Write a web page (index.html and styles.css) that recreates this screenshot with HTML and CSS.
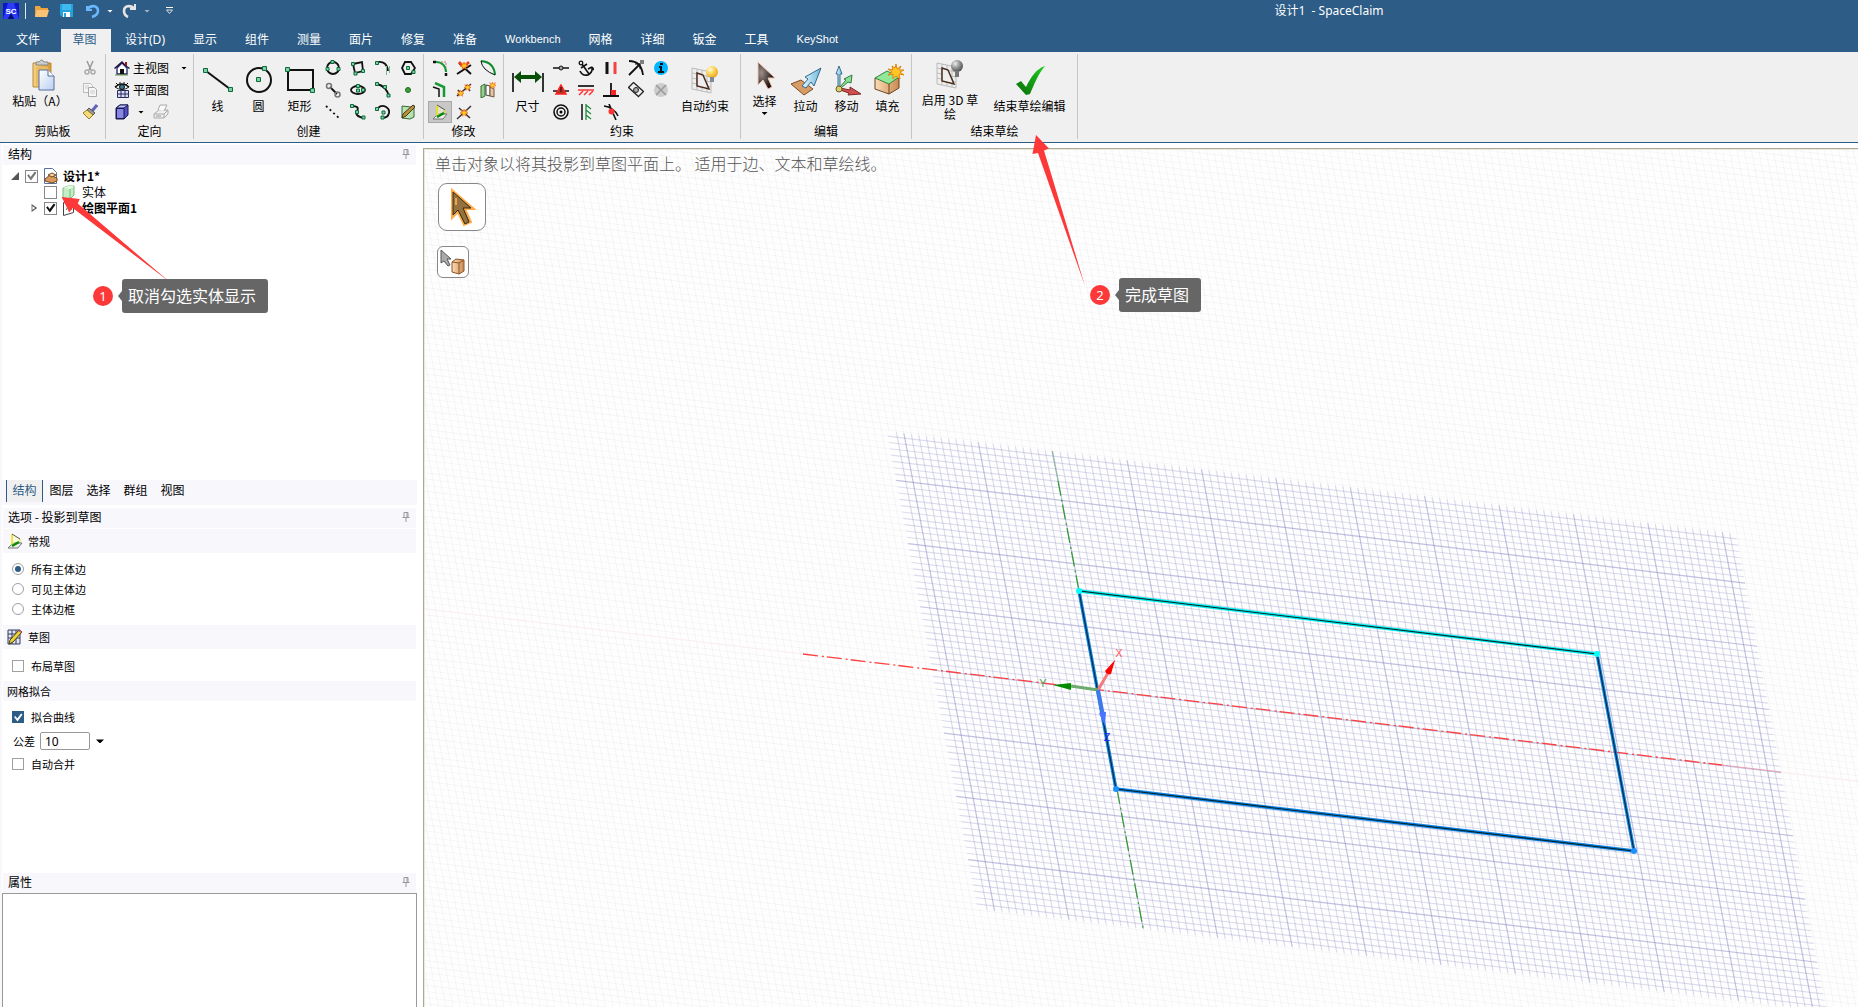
FILE: index.html
```html
<!DOCTYPE html>
<html lang="zh-CN">
<head>
<meta charset="utf-8">
<title>设计1 - SpaceClaim</title>
<link rel="stylesheet" href="styles.css">
</head>
<body>
<svg class="defs" aria-hidden="true">
  <defs>
    <linearGradient id="gold" x1="0" x2="1"><stop offset="0" stop-color="#f6d283"/><stop offset="1" stop-color="#d79a35"/></linearGradient>
    <linearGradient id="paper" x1="0" y1="0" x2="1" y2="1"><stop offset="0" stop-color="#fff"/><stop offset="1" stop-color="#b9cff0"/></linearGradient>
    <linearGradient id="cyan" x1="0" x2="1"><stop offset="0" stop-color="#e2f6fd"/><stop offset="1" stop-color="#6db9dd"/></linearGradient>
    <linearGradient id="wood" x1="0" x2="1"><stop offset="0" stop-color="#fbdcb8"/><stop offset="1" stop-color="#c98a50"/></linearGradient>
    <linearGradient id="check" x1="0" y1="1" x2="1" y2="0"><stop offset="0" stop-color="#0a6a0a"/><stop offset="1" stop-color="#1fd01f"/></linearGradient>
    <radialGradient id="bulb" cx=".35" cy=".3" r=".8"><stop offset="0" stop-color="#fffbe0"/><stop offset=".5" stop-color="#fbd04a"/><stop offset="1" stop-color="#e29a1c"/></radialGradient>
    <radialGradient id="bulb-off" cx=".35" cy=".3" r=".8"><stop offset="0" stop-color="#eee"/><stop offset=".5" stop-color="#8d8d8d"/><stop offset="1" stop-color="#444"/></radialGradient>
    <radialGradient id="dark" cx=".2" cy=".4" r=".7"><stop offset="0" stop-color="#9a8f8c"/><stop offset="1" stop-color="#1c0f0a"/></radialGradient>
    <symbol id="pin" viewBox="0 0 8 10"><path d="M2 .5h4v5H2zM.5 5.5h7M4 6v4M5 1v4" fill="none" stroke="#999"/></symbol>
    <symbol id="project" viewBox="0 0 16 16"><path d="M1 15l5-5h9l-4 5z" fill="#eee" stroke="#777"/><path d="M5 1v11l8-6z" fill="#fdfdc8" fill-opacity=".5"/><path d="M5 1v11" stroke="#ece200" stroke-width="1.500"/><path d="M13 6v3" stroke="#ece200"/><path d="M5 1l8 5" stroke="#555"/><path d="M5 13l7-4" stroke="#078a07" stroke-width="2.400"/></symbol>
    <symbol id="burst" viewBox="0 0 10 10"><path d="M5 0l1 3 3-2-1 3 2 1-3 1 1 3-3-2-2 2V6L0 5l3-1-2-3 3 2z" fill="#ffd21c" stroke="#f05a1c" stroke-width=".8"/></symbol>
  </defs>
</svg>

<div class="app">
  <header class="titlebar">
    <div class="quick">
      <svg class="logo" viewBox="0 0 16 16"><rect width="16" height="16" fill="#0c18c8"/><path d="M5 0h6l5 16h-5L8 10l-3 6H0z" fill="#2b3cf8"/><path d="M5 16l3-6 3 6z" fill="#000c70"/><text x="8" y="11" text-anchor="middle">SC</text></svg>
      <span class="rule"></span>
      <button class="q" aria-label="打开"><svg width="16" height="16"><path d="M1 14V3h5l1 2h7v3" fill="#eda43f"/><path d="M1 14l2-7h12l-2 7z" fill="#fbc277"/></svg></button>
      <button class="q" aria-label="保存"><svg width="16" height="16"><path d="M1 1h13v13H3l-2-2z" fill="#22a3dc"/><path d="M3 1h9v6H3z" fill="#3fb9ee"/><path d="M4 9h7v5H4z" fill="#fff"/><path d="M5 10h2v4H5z" fill="#22a3dc"/></svg></button>
      <button class="q" aria-label="撤消"><svg width="16" height="16"><path d="M3 3v4h5" fill="none" stroke="#6cb8ff" stroke-width="2"/><path d="M3 6c5-5 11-3 11 2 0 3-3 5-6 6" fill="none" stroke="#6cb8ff" stroke-width="2.600"/></svg></button>
      <i class="caret light"></i>
      <button class="q redo" aria-label="恢复"><svg width="16" height="16"><path d="M13 1v5H8" fill="none" stroke="#e4e4e4" stroke-width="2"/><path d="M13 6C8 1 2 3 2 8c0 3 2 5 4 6" fill="none" stroke="#e4e4e4" stroke-width="2.600"/></svg></button>
      <i class="caret dim"></i>
      <svg class="more" width="7" height="8"><path d="M0 .5h7" stroke="#fff"/><path d="M.5 3h6L3.500 6.500z" fill="none" stroke="#ddd"/></svg>
    </div>
    <h1 class="title">设计1&nbsp; - SpaceClaim</h1>
  </header>

  <nav class="tabs">
    <button class="tab file">文件</button><button class="tab active">草图</button><button class="tab">设计<span class="key">(D)</span></button><button class="tab">显示</button><button class="tab">组件</button><button class="tab">测量</button><button class="tab">面片</button><button class="tab">修复</button><button class="tab">准备</button><button class="tab latin">Workbench</button><button class="tab">网格</button><button class="tab">详细</button><button class="tab">钣金</button><button class="tab">工具</button><button class="tab latin">KeyShot</button>
  </nav>

  <div class="ribbon">
    <section class="group">
      <div class="tools">
        <button class="big high w74"><svg width="32" height="32"><path d="M9 4h18v24H9z" fill="url(#gold)" stroke="#b98a3c"/><path d="M12 6V3h3q3-4 5 0h4v3z" fill="#ccc" stroke="#888"/><path d="M12 8h12v18H12z" fill="#e9bc63"/><path d="M15 11h9l6 6v14H15z" fill="url(#paper)" stroke="#546fa0"/><path d="M24 11v6h6" fill="#fff" stroke="#546fa0"/></svg><span>粘贴（A）</span></button>
        <div class="grid c1">
          <button aria-label="剪切"><svg width="16" height="16"><path d="M5 1l4 9M11 1L7 10" stroke="#999" stroke-width="1.500"/><circle cx="5" cy="12" r="2" fill="none" stroke="#aaa" stroke-width="1.500"/><circle cx="11" cy="12" r="2" fill="none" stroke="#aaa" stroke-width="1.500"/></svg></button>
          <button aria-label="复制"><svg width="16" height="16"><path d="M1.500 1.500h7l2 2v7h-9z" fill="#f6f6f6" stroke="#bbb"/><path d="M6.500 5.500h6l2 2v7h-8z" fill="#f6f6f6" stroke="#aaa"/><path d="M3 4h4M3 6h3M8 9h5M8 11h5" stroke="#ccc"/></svg></button>
          <button aria-label="格式刷"><svg width="16" height="16"><path d="M15 1l-5 6" stroke="#6464b8" stroke-width="3"/><path d="M7 4l6 5-2 2-6-5z" fill="#999" stroke="#555"/><path d="M5 6l6 5-4 4-6-6z" fill="#f4dc78" stroke="#9a7a22"/></svg></button>
        </div>
      </div>
      <h2>剪贴板</h2>
    </section>
    <section class="group">
      <div class="tools orient">
        <div class="line"><button><svg width="16" height="16"><path d="M3 8v6h10V8L8 3z" fill="#fff" stroke="#22226a" stroke-width="1.300"/><path d="M0 8l8-7 3 3V2h2v4l3 2-1 1-7-6-7 6z" fill="#1d1640"/><path d="M11 2h2v4l-2-1z" fill="#a11"/><path d="M6 9h4v5H6z" fill="#111"/><path d="M1 15h13" stroke="#6a9a3a"/></svg>主视图</button><i class="caret push"></i></div>
        <div class="line"><button><svg width="16" height="16"><path d="M1 5q7-6 14 0" fill="none" stroke="#111" stroke-width="1.500"/><path d="M1 5q7 5 14 0" fill="#fff" stroke="#111"/><circle cx="8" cy="5" r="2.500" fill="#397b8f" stroke="#111"/><path d="M2 1l2 2M6 0v2M10 0v2M14 1l-2 2" stroke="#111"/><path d="M3.500 8.500h11v7h-11zM3.500 12h11M7 8v8M11 8v8" fill="#d8dcf4" stroke="#2b2b5c"/></svg>平面图</button></div>
        <div class="line"><button aria-label="视图方向"><svg width="16" height="16"><path d="M2 4l4-3h8v10l-4 4H2z" fill="#5050c0" stroke="#191950"/><path d="M2 4l4-3h8l-4 3z" fill="#c4c4fc" stroke="#191950"/><path d="M2.500 4.500H10v10H2.500z" fill="#8888e4" stroke="#191950"/></svg></button><i class="caret"></i><button class="print" aria-label="打印"><svg width="18" height="16"><path d="M2 10l5-4h9l-4 4zM2 10v4h10l4-4V6M12 10v4" fill="#eee" stroke="#aaa"/><path d="M6 6l2-5h7l-3 6" fill="#fafafa" stroke="#aaa"/><path d="M4 12h5" stroke="#999"/></svg></button></div>
      </div>
      <h2>定向</h2>
    </section>
    <section class="group">
      <div class="tools">
        <button class="big"><svg width="32" height="32"><path d="M4 7l24 18" stroke="#111" stroke-width="2"/><g class="node"><path d="M1.500 4.500h4v4h-4zM26.500 23.500h4v4h-4z"/></g></svg><span>线</span></button>
        <button class="big"><svg width="32" height="32"><circle cx="16" cy="16" r="12" fill="none" stroke="#111" stroke-width="2"/><g class="node"><path d="M13.500 13.500h4v4h-4zM19.500 2.500h4v4h-4z"/></g></svg><span>圆</span></button>
        <button class="big"><svg width="32" height="32"><path d="M4 6h25v20H4z" fill="none" stroke="#111" stroke-width="2"/><g class="node"><path d="M1.500 3.500h4v4h-4zM26.500 24.500h4v4h-4z"/></g></svg><span>矩形</span></button>
        <div class="grid c4 create">
          <button aria-label="三点圆"><svg width="16" height="16"><circle cx="8" cy="8" r="6"/><g class="node"><path d="M6 .5h3v3H6zM1 7.500h3v3H1zM12 7.500h3v3h-3z"/></g></svg></button>
          <button aria-label="三点矩形"><svg width="16" height="16"><path d="M3 4l9-2 1 9-8 2z"/><g class="node"><path d="M1.500 2.500h3v3h-3zM11.500 9.500h3v3h-3zM4 12h3v3H4z"/></g></svg></button>
          <button aria-label="切线弧"><svg width="16" height="16"><path d="M3 2q9-1 10 9"/><path d="M11.500 6v9M14.500 6v7" class="faint"/><g class="node"><path d="M.5 1.500h3v3h-3z"/></g></svg></button>
          <button aria-label="多边形"><svg width="16" height="16"><path d="M5 2h6l4 6-4 6H5L2 8z"/><g class="node"><path d="M6.500 6.500h3v3h-3zM12 10.500h3v3h-3z"/></g></svg></button>
          <button aria-label="切线"><svg width="16" height="16"><path d="M5 5l7 7"/><circle cx="4" cy="4" r="2.500" class="gray"/><circle cx="12.500" cy="12.500" r="2.500" class="gray"/></svg></button>
          <button aria-label="椭圆"><svg width="16" height="16"><ellipse cx="8" cy="8" rx="7" ry="4"/><g class="node"><path d="M6.500 2.500h3v3h-3zM6.500 7h3v3h-3zM11.500 6.500h3v3h-3z"/></g></svg></button>
          <button aria-label="三点弧"><svg width="16" height="16"><path d="M2 2q9 2 12 12"/><g class="node"><path d="M.5 .5h3v3h-3zM8.500 3.500h3v3h-3zM12 12h3v3h-3z"/></g></svg></button>
          <button aria-label="点"><svg width="16" height="16"><circle cx="8" cy="8" r="2.500" class="dot"/></svg></button>
          <button aria-label="参考线"><svg width="16" height="16"><path d="M1 2l14 13" stroke-dasharray="2 3"/></svg></button>
          <button aria-label="样条曲线"><svg width="16" height="16"><path d="M2 2q8 0 5 5t7 7"/><g class="node"><path d="M.5 .5h3v3h-3zM5.500 6.500h3v3h-3zM12 12h3v3h-3z"/></g></svg></button>
          <button aria-label="扫掠弧"><svg width="16" height="16"><path d="M3 4c5-5 12 0 11 5q-1 5-7 5"/><g class="node"><path d="M.5 3.500h3v3h-3zM7 7h3v3H7zM6 12h3v3H6z"/></g></svg></button>
          <button aria-label="面曲线"><svg width="16" height="16"><path d="M2 2l9 1 3-2v12l-4 2-8-1z" class="face"/><path d="M2 14l1-4L13 1l2 2-9 9z" fill="#b99437" stroke="#4a351b" stroke-width="1"/></svg></button>
        </div>
      </div>
      <h2>创建</h2>
    </section>
    <section class="group">
      <div class="tools modify">
        <div class="grid c3">
          <button aria-label="圆角"><svg width="16" height="16"><path d="M1 2h3M14 13v3" stroke="#111" stroke-width="2.500"/><path d="M4 2c6 0 10 4 10 10" fill="none" stroke="#159a35" stroke-width="2"/><path d="M9 2h5v5" fill="none" stroke="#b77" stroke-dasharray="2 1"/></svg></button>
          <button aria-label="修剪"><svg width="16" height="16"><path d="M1 14l14-9M3 3l12 11" stroke="#111" stroke-width="2"/><path d="M3 2l5 5 5-5" stroke="#f33a12" stroke-width="2.500" fill="none"/><use href="#burst" x="4" y="2" width="8" height="8"/></svg></button>
          <button aria-label="创建角"><svg width="16" height="16"><path d="M1 1q13 1 14 14" fill="none" stroke="#0d8a2c" stroke-width="2"/><path d="M1 1q1 9 14 14" fill="none" stroke="#111"/></svg></button>
          <button aria-label="偏移"><svg width="16" height="16"><path d="M1 5l6 2v8" fill="none" stroke="#111" stroke-width="1.500"/><path d="M3 1l9 4v10" fill="none" stroke="#159a35" stroke-width="2.500"/></svg></button>
          <button aria-label="分割"><svg width="16" height="16"><path d="M1 14L15 2M2 8l4 5M10 3l4 6" stroke="#222" stroke-width="1.500"/><use href="#burst" x="1" y="8" width="7" height="7"/><use href="#burst" x="8" y="2" width="7" height="7"/></svg></button>
          <button aria-label="弯曲"><svg width="16" height="16"><path d="M1 4l4-2v12l-4 2z" fill="#9ad08b" stroke="#356d30"/><path d="M6 3l4 1v10l-4-1z" fill="#fff" stroke="#444"/><path d="M10 5l4 2v8l-4-1z" fill="#e6c79f" stroke="#754"/><use href="#burst" x="9" y="0" width="7" height="7"/></svg></button>
          <button class="pressed" aria-label="投影到草图"><svg width="16" height="16"><use href="#project" width="16" height="16"/></svg></button>
          <button aria-label="分割曲线"><svg width="16" height="16"><path d="M1 15L15 2M3 4l11 10" stroke="#333" stroke-width="1.500"/><use href="#burst" x="4" y="5" width="8" height="8"/></svg></button>
        </div>
      </div>
      <h2>修改</h2>
    </section>
    <section class="group">
      <div class="tools">
        <button class="big"><svg width="32" height="32"><path d="M1 9v19M31 9v19" stroke="#333" stroke-width="2"/><path d="M2 13l7-6v4h14V7l7 6-7 6v-4H9v4z" fill="#064f06"/></svg><span>尺寸</span></button>
        <div class="grid c5">
          <button aria-label="中点"><svg width="16" height="16"><path d="M0 8h16" stroke="#111" stroke-width="1.500"/><circle cx="8" cy="8" r="2" fill="#aaa" stroke="#111"/></svg></button>
          <button aria-label="固定"><svg width="16" height="16"><path d="M4 4l7 10M3 8l6-4M2 11q2 5 8 4 5-3 4-8M14 7l-4 2M14 7l2 3" fill="none" stroke="#111" stroke-width="1.600"/><circle cx="3" cy="3" r="1.800" fill="none" stroke="#111" stroke-width="1.300"/></svg></button>
          <button aria-label="平行"><svg width="16" height="16"><path d="M4 2v12" stroke="#111" stroke-width="3"/><path d="M12 2v12" stroke="#f54242" stroke-width="3"/></svg></button>
          <button aria-label="相切"><svg width="16" height="16"><path d="M1 1c9 0 13 6 14 14M1 15L12 4" fill="none" stroke="#111" stroke-width="1.800"/><path d="M7 4h5v5M12 1h4M12 3h4" fill="none" stroke="#111"/></svg></button>
          <button aria-label="信息"><svg width="16" height="16"><circle cx="8" cy="8" r="7" fill="#00b5ff"/><path d="M6 6h3v5h2v2H5v-2h2V8H6zM7 3h3v2H7z" fill="#111"/></svg></button>
          <button aria-label="对称"><svg width="16" height="16"><path d="M0 9h16" stroke="#111" stroke-width="1.500"/><path d="M8 3l5 9H3z" fill="#bf3027" stroke="#f22" stroke-width="1.500"/><path d="M8 5v5" stroke="#111"/></svg></button>
          <button aria-label="水平"><svg width="16" height="16"><path d="M0 4h16" stroke="#333" stroke-width="2"/><path d="M0 8h16" stroke="#f33" stroke-width="1.500"/><path d="M1 13l4-4M6 13l4-4M11 13l4-4" stroke="#f33" stroke-width="1.500"/></svg></button>
          <button aria-label="垂直"><svg width="16" height="16"><path d="M0 14h16M8 1v13" stroke="#111" stroke-width="1.800"/><path d="M8 8h5v5H8z" fill="#f22"/></svg></button>
          <button aria-label="同心"><svg width="16" height="16"><path d="M5 0l11 10M0 5l11 10M5 1L1 5M15 10l-4 4" stroke="#222" stroke-width="1.300"/><circle cx="8" cy="8" r="2.500" fill="#aaa" stroke="#222"/></svg></button>
          <button aria-label="移除约束"><svg width="16" height="16"><circle cx="8" cy="8" r="7" fill="#ccc"/><path d="M3 3l10 10M13 3L3 13" stroke="#999" stroke-width="1.500"/></svg></button>
          <button aria-label="同心圆"><svg width="16" height="16"><circle cx="8" cy="8" r="7" fill="none" stroke="#111" stroke-width="1.600"/><circle cx="8" cy="8" r="4" fill="none" stroke="#111" stroke-width="1.500"/><circle cx="8" cy="8" r="1.500"/></svg></button>
          <button aria-label="竖直"><svg width="16" height="16"><path d="M4 0v16" stroke="#444" stroke-width="2"/><path d="M8 0v16M8 1l5 4M8 6l5 4M8 11l5 4" stroke="#1f8a3a" stroke-width="1.300"/></svg></button>
          <button aria-label="重合"><svg width="16" height="16"><path d="M1 2c8 1 12 6 14 10M6 0l7 16" fill="none" stroke="#111" stroke-width="1.600"/><circle cx="8.500" cy="7.500" r="3" fill="#f33"/></svg></button>
        </div>
        <button class="big w64"><svg width="32" height="32"><path d="M3 4l19 4v21L3 25z" fill="#eee" stroke="#bbb"/><path d="M3 9l19 4M3 14l19 4M3 19l19 4M8 5v21M13 6v21M18 7v21" stroke="#bbb"/><path d="M8 9l6 2 6 14-12-3z" fill="#eee" stroke="#4a2a1a" stroke-width="1.500"/><circle cx="23" cy="8" r="6" fill="url(#bulb)"/><path d="M21 13h4v5h-4z" fill="#7f8a94"/></svg><span>自动约束</span></button>
      </div>
      <h2>约束</h2>
    </section>
    <section class="group">
      <div class="tools">
        <button class="big high"><svg width="32" height="32"><path d="M9 3v23l5-5 5 9 4-2-4-9h7z" fill="url(#dark)" stroke="#f2c7b4"/></svg><span>选择</span><i class="caret below"></i></button>
        <button class="big"><svg width="32" height="32"><path d="M1 20l10-4 12 9-9 6z" fill="#d79b66" stroke="#7c4c24"/><path d="M31 4L15 13l3 2-6 7 4 2 5-6 3 4z" fill="url(#cyan)" stroke="#35698c"/></svg><span>拉动</span></button>
        <button class="big"><svg width="32" height="32"><path d="M7 24V10H5l3-8 3 8H9v14z" fill="url(#cyan)" stroke="#39708f"/><path d="M9 23l6-7-2-1 8-4-1 8-3-1-7 6z" fill="#8fe09a" stroke="#2d7d3d"/><path d="M9 24l10 2v-3l11 7-13 1 1-2-9-3z" fill="#d05050" stroke="#802828"/><circle cx="8" cy="25" r="3" fill="#d8cf70" stroke="#665d20"/></svg><span>移动</span></button>
        <button class="big"><svg width="32" height="32"><path d="M3 14v11l14 5 10-6V14z" fill="url(#wood)" stroke="#6b4323"/><path d="M3 14l12-7 12 6-10 7z" fill="#91e897" stroke="#358543"/><path d="M17 20v10" stroke="#6b4323"/><path d="M24 0l1 5 4-3-2 4h5l-4 2 4 3-5-1 1 5-4-3-3 3v-5l-5 1 4-3-4-3 5 1-1-4 3 2z" fill="#ffc629" stroke="#e2860a"/></svg><span>填充</span></button>
      </div>
      <h2>编辑</h2>
    </section>
    <section class="group">
      <div class="tools">
        <button class="big high w70"><svg width="32" height="32"><path d="M3 4l19 4v21L3 25z" fill="#eee" stroke="#bbb"/><path d="M3 9l19 4M3 14l19 4M3 19l19 4M8 5v21M13 6v21M18 7v21" stroke="#bbb"/><path d="M8 9l6 2 6 14-12-3z" fill="#eee" stroke="#4a2a1a" stroke-width="1.500"/><circle cx="23" cy="7" r="6" fill="url(#bulb-off)"/><path d="M21 12h4v6h-4z" fill="#777"/></svg><span class="two">启用 3D 草<br>绘</span></button>
        <button class="big w89"><svg width="32" height="32"><path d="M2 20l5-3 5 6C17 13 22 5 31 2 24 10 20 21 16 30l-4 1z" fill="url(#check)"/></svg><span>结束草绘编辑</span></button>
      </div>
      <h2>结束草绘</h2>
    </section>
  </div>

  <main class="work">
    <aside class="side">
      <div class="head"><h2>结构</h2><svg width="8" height="10"><use href="#pin" width="8" height="10"/></svg></div>
      <ul class="tree">
        <li class="root"><i class="exp open"></i><input type="checkbox" id="t1" class="partial" checked><svg width="16" height="16"><path d="M2.500 .5h8l4 4v11h-12z" fill="#fff" stroke="#58709c"/><path d="M3 11l5-4 7 3v3l-5 2-7-2z" fill="#d99a5b" stroke="#744720"/><path d="M6 7l4-2 4 2-4 2z" fill="#f8d6aa" stroke="#744720"/></svg><label for="t1">设计1*</label></li>
        <li class="child"><i class="exp"></i><input type="checkbox" id="t2"><svg width="16" height="16"><path d="M2 4l5-2h6v9l-4 4H2z" fill="#c3edc5" stroke="#79ba7c"/><path d="M2 4l5-2h6L9 5z" fill="#e4fbe4"/><path d="M9 5v10" stroke="#79ba7c"/></svg><label for="t2">实体</label></li>
        <li class="child plane"><i class="exp closed"></i><input type="checkbox" id="t3" checked><svg width="16" height="16"><path d="M2.500 2.500l10 1v9l-10 3z" fill="#fff" stroke="#444"/><path d="M5 10l3-5 3 5" fill="none" stroke="#3d8a59"/></svg><label for="t3">绘图平面1</label></li>
      </ul>
      <div class="panetabs"><button class="on">结构</button><button>图层</button><button>选择</button><button>群组</button><button>视图</button></div>
      <div class="head opt"><h2>选项 - 投影到草图</h2><svg width="8" height="10"><use href="#pin" width="8" height="10"/></svg></div>
      <form class="options">
        <h3><svg width="16" height="16"><use href="#project" width="16" height="16"/></svg>常规</h3>
        <div class="radios">
          <label><input type="radio" name="edge" checked>所有主体边</label>
          <label><input type="radio" name="edge">可见主体边</label>
          <label><input type="radio" name="edge">主体边框</label>
        </div>
        <h3><svg width="16" height="16"><path d="M1 1h12v14H1zM1 5h12M1 9h12M5 1v14M9 1v14" fill="#e3e5f2" stroke="#333a60"/><path d="M2 15l1-4L12 1l3 2-9 10z" fill="#ecd534" stroke="#4a3c17"/><path d="M12 1l3 2-1 1-3-2z" fill="#c66"/></svg>草图</h3>
        <div class="one"><label><input type="checkbox">布局草图</label></div>
        <h3 class="short">网格拟合</h3>
        <div class="fit">
          <label><input type="checkbox" checked>拟合曲线</label>
          <div class="tol"><label for="tol">公差</label><input type="text" id="tol" value="10"><i class="caret wide"></i></div>
          <label><input type="checkbox">自动合并</label>
        </div>
      </form>
      <div class="head"><h2>属性</h2><svg width="8" height="10"><use href="#pin" width="8" height="10"/></svg></div>
      <div class="props"></div>
    </aside>

    <section class="view">
      <svg class="scene" viewBox="425 150 1433 857" preserveAspectRatio="xMinYMin slice">
        <g transform="matrix(7.44 .9 1.2 6.32 1098 690)" fill="none">
          <g stroke="#000" stroke-opacity=".035">
            <path d="M-130.070 0H150" stroke-width="240" stroke-dasharray=".14 .86"/>
            <path d="M10 -110.070V90" stroke-width="280" stroke-dasharray=".14 .86"/>
          </g>
          <path d="M-22.300 -37.800H91.800V37.800H-22.300z" fill="#fefefe"/>
          <g stroke="#8a8ac4" stroke-opacity=".3">
            <path d="M-21.080 0H91.500" stroke-width="75.600" stroke-dasharray=".16 .84"/>
            <path d="M34.750 -37.080V37.500" stroke-width="114.100" stroke-dasharray=".18 .82"/>
          </g>
          <g stroke="#8080c4" stroke-opacity=".28">
            <path d="M-20.080 0H91.500" stroke-width="75.600" stroke-dasharray=".16 9.840"/>
            <path d="M34.750 -30.080V37.500" stroke-width="114.100" stroke-dasharray=".18 9.820"/>
          </g>
        </g>
        <g fill="none">
          <path d="M1052 451l6 30" stroke="#8fb89a"/>
          <path d="M1058 481l21 110M1117 789l26 139" stroke="#2e9a2e" stroke-width="1.200" stroke-dasharray="15 4 2 3"/>
          <path d="M803 654L1722 765" stroke="#ff4040" stroke-width="1.300" stroke-dasharray="15 4 2 3"/>
          <path d="M1722 765l59 7" stroke="#e8a0b4"/>
          <path d="M1781 772l77 9M425 609l378 45" stroke="#fbeff0"/>
          <path d="M1079 591L1597 654" stroke="#00f0f0" stroke-width="3.400"/>
          <path d="M1079 591L1116 789 1634 851 1597 654" stroke="#0a84e8" stroke-width="3.400"/>
          <path d="M1079 591L1116 789 1634 851 1597 654z" stroke="#08262c" stroke-width="1.100"/>
          <path d="M1098 690l10-17" stroke="#f27a7a" stroke-width="3"/>
          <path d="M1098 690l-27-4" stroke="#6cab6c" stroke-width="3"/>
          <path d="M1098 690l5 26" stroke="#3f78e8" stroke-width="4"/>
        </g>
        <path d="M1115 660l-10 11q2 4 6 3z" fill="#f00"/>
        <path d="M1053 685l18-2v7z" fill="#008a00"/>
        <path d="M1099 713q3-2 7-1l-1 14z" fill="#4a74ff"/>
        <circle cx="1079" cy="591" r="3" fill="#0ff"/><circle cx="1597" cy="654" r="3" fill="#0ff"/>
        <circle cx="1116" cy="789" r="3" fill="#1e90ff"/><circle cx="1634" cy="851" r="3" fill="#1e90ff"/>
        <g class="axis"><text x="1119" y="657" fill="#ff5c5c">X</text><text x="1043" y="687" fill="#4fa34f">Y</text><text x="1107" y="741" fill="#2626ff">Z</text></g>
      </svg>
      <div class="hud">
        <p>单击对象以将其投影到草图平面上。 适用于边、文本和草绘线。</p>
        <button class="cursor" aria-label="选择工具"><svg width="30" height="40"><path d="M5 3v28l6-6 6 13 7-3-6-13h9z" fill="#9b7740" stroke="#ffad4a" stroke-width="2"/><path d="M6 5v23l5-5 7 14 4-2-6-14h8z" fill="#94713d" stroke="#3a2b12"/><path d="M9 11v7" stroke="#e0aa58" stroke-width="2"/></svg></button>
        <button class="bodysel" aria-label="选择主体"><svg width="26" height="26"><path d="M1 1v13l3-2 4 5 2-1-3-6h4z" fill="#aaa" stroke="#555"/><path d="M12 13l4-3 8 1v11l-5 3-7-2z" fill="url(#wood)" stroke="#8b5427"/><path d="M12 13l7 1 5-3M19 14v11" fill="none" stroke="#8b5427"/></svg></button>
      </div>
    </section>
  </main>

  <svg class="marks" width="1200" height="320"><path d="M61.700 197l18 2-2 4.500 92 78.500-97-74-3.500 4.500zM1036 135l13 13.500-5 2 41 135.500-47-133-5.500 1z" fill="#fc3838"/></svg>
  <div class="note first"><b>1</b><span>取消勾选实体显示</span></div>
  <div class="note second"><b>2</b><span>完成草图</span></div>
</div>
</body>
</html>
```
FILE: styles.css
```css
* { box-sizing: border-box; }
body { margin: 0; background: #fff; color: #000; font: 12px/16px "Noto Sans CJK SC", sans-serif; }
h1, h2, h3, p, ul { margin: 0; padding: 0; font-size: inherit; font-weight: normal; list-style: none; }
button { margin: 0; padding: 0; border: 0; background: none; color: inherit; font: inherit; }
svg { display: block; flex: none; }
.defs { position: absolute; width: 0; height: 0; }
.app { position: relative; display: flex; flex-direction: column; height: 100vh; min-height: 800px; overflow: hidden; }
.node path { fill: #7fd0a0; stroke: #0a6a3c; stroke-width: 1; }

.caret { flex: none; width: 6px; height: 3px; background: #000; clip-path: polygon(0 0, 100% 0, 50% 100%); }
.caret.light { background: #fff; margin: 0 9px 0 7px; }
.caret.dim { background: #a9b6c3; margin: 0 16px 0 6px; }
.caret.wide { width: 8px; height: 4px; }

/* title bar */
.titlebar { display: flex; align-items: center; height: 22px; background: #2d5c86; color: #fff; }
.quick { display: flex; align-items: center; width: 800px; padding-left: 3px; }
.logo { width: 16px; height: 16px; }
.logo text { font: bold 8px "Liberation Sans", sans-serif; fill: #fff; }
.rule { width: 1px; height: 16px; margin: 0 8px 0 6px; background: #dfe7ee; }
.q { margin-right: 9px; }
.q:nth-of-type(3), .q.redo { margin-right: 0; }
.title { flex: 1; text-align: center; font: 12px/20px "Noto Sans", "Noto Sans CJK SC", sans-serif; }

/* ribbon tabs */
.tabs { display: flex; align-items: flex-end; height: 30px; background: #2d5c86; color: #fff; }
.tab { height: 23px; padding: 0 14px 3px; line-height: 18px; white-space: nowrap; }
.tab.file { width: 61px; padding: 0 0 3px 16px; text-align: left; }
.tab.active { width: 50px; padding: 0 3px 3px 0; background: #f0f0f0; color: #2d5c86; }
.tab.latin { font-family: "Liberation Sans", sans-serif; font-size: 11px; }
.key { font-family: "Noto Sans", sans-serif; }

/* ribbon */
.ribbon { display: flex; height: 91px; background: #f0f0f0; border-bottom: 1px solid #2d5c86; }
.group { display: flex; flex-direction: column; position: relative; padding: 0 3px; border-right: 1px solid transparent; border-image: linear-gradient(transparent 3px, #c6c6c6 3px, #c6c6c6 86px, transparent 86px) 1; }
.group h2 { text-align: center; line-height: 16px; }
.tools { display: flex; height: 71px; }
.big { display: flex; flex-direction: column; align-items: center; gap: 2px; width: 41px; padding-top: 12px; white-space: nowrap; }
.high { padding-top: 7px; }
.w64 { width: 64px; }
.w70 { width: 70px; }
.w74 { width: 74px; }
.w89 { width: 89px; }
.two { line-height: 14px; }
.grid { display: grid; grid-auto-rows: 22px; grid-template-columns: repeat(var(--cols), 25px); padding-top: 5px; }
.grid button { display: flex; align-items: center; justify-content: center; }
.c1 { --cols: 1; }
.c3 { --cols: 3; grid-template-columns: repeat(3, 24px); }
.c4 { --cols: 4; }
.c5 { --cols: 5; }
.create svg { fill: none; stroke: #111; stroke-width: 1.8; }
.create .faint { stroke: #7fb594; stroke-width: 1; }
.create .gray { stroke: #777; stroke-width: 1.5; }
.create .dot { fill: #3f9a3f; stroke: #157015; stroke-width: 1; }
.create .face { fill: #b9e2b4; stroke: #2f6a34; stroke-width: 1; }
.modify { padding-left: 1px; }
.pressed { background: #c8c8c8; outline: 1px solid #a8a8a8; outline-offset: -1px; }
.orient { flex-direction: column; width: 81px; padding: 5px 3px 0 5px; }
.line { display: flex; align-items: center; height: 22px; }
.line button { display: flex; align-items: center; gap: 3px; white-space: nowrap; }
.line .push { margin-left: auto; }
.line .caret:not(.push) { margin: 0 8px; }
.below { margin-top: 1px; }

/* left side */
.work { display: flex; flex: 1; min-height: 0; background: #fff; }
.side { display: flex; flex-direction: column; width: 423px; padding: 2px 6px 0 0; border-left: 2px solid #f7f7fc; }
.head { display: flex; flex: none; justify-content: space-between; align-items: center; height: 20px; margin: 0 1px; padding: 0 6px 2px 5px; background: #f7f7fc; }
.opt { margin-bottom: 1px; }
.tree { flex: 10 1 0; padding-top: 3px; }
.tree li { display: flex; align-items: center; height: 16px; }
.tree svg { margin: 0 5px 0 4px; }
.root { padding-left: 9px; }
.root label, .plane label { font-weight: bold; }
.child { padding-left: 28px; }
.exp { width: 8px; height: 8px; margin-right: 6px; }
.open { background: #555; clip-path: polygon(100% 0, 100% 100%, 0 100%); }
.closed { background: #555; clip-path: polygon(20% 0, 90% 50%, 20% 100%, 20% 80%, 30% 75%, 65% 50%, 30% 25%, 30% 75%, 20% 80%); }
.panetabs { display: flex; flex: none; height: 25px; margin-bottom: 3px; padding: 0 0 3px 4px; background: #f7f7fc; }
.panetabs button { width: 37px; padding-bottom: 2px; line-height: 16px; }
.panetabs .on { color: #2d5c86; background: #f0f0f0; border: 1px solid #2d5c86; border-width: 0 1px; }
.options { flex: 11 1 0; margin: 0 1px; font-size: 11px; }
.options h3 { display: flex; align-items: center; gap: 5px; height: 24px; padding-left: 4px; background: #f7f7fc; }
.options h3.short { height: 20px; }
.options label { display: flex; align-items: center; }
input[type=radio], input[type=checkbox] { appearance: none; flex: none; position: relative; width: 12px; height: 12px; margin: 0; border: 1px solid #a0a0a0; background: #fff; }
.options label input { margin: 0 7px 0 9px; }
input[type=radio] { border-radius: 50%; }
input[type=radio]:checked::after { content: ""; position: absolute; inset: 2px; border-radius: 50%; background: #2d5c86; }
input[type=checkbox]:checked::after { content: ""; position: absolute; inset: 0; background: #111; clip-path: polygon(10% 45%, 25% 35%, 42% 60%, 80% 10%, 95% 20%, 45% 90%); }
.tree input { width: 13px; height: 13px; border-color: #888; }
.tree input.partial:checked::after { background: #777; }
.options input[type=checkbox]:checked { background: #2d5c86; border-color: #2d5c86; }
.options input[type=checkbox]:checked::after { background: #fff; }
.radios { padding: 6px 0; }
.radios label { height: 20px; }
.one { padding: 7px 0 5px; }
.one label, .fit > label { height: 20px; }
.fit { padding-top: 6px; }
.tol { display: flex; align-items: center; height: 27px; padding: 1px 0 0 10px; }
.tol input { width: 50px; height: 18px; margin: 0 6px 0 5px; padding: 0 4px; border: 1px solid #999; border-radius: 2px; font: 12px/16px "Noto Sans", sans-serif; }
.props { flex: none; height: 114px; border: 1px solid #999; border-bottom: 0; }

/* sketch viewport */
.view { position: relative; flex: 1; min-width: 0; margin-top: 5px; border: solid #aca899; border-width: 1px 0 0 1px; box-shadow: inset 1px 1px #ece9d8; background: #fefefe; padding: 1px 0 0 1px; overflow: hidden; }
.scene { width: 100%; height: 100%; }
.axis { font: 11px "Liberation Sans", sans-serif; text-anchor: middle; }
.hud { position: absolute; top: 4px; left: 11px; color: #555; }
.hud p { font-size: 16px; line-height: 20px; font-weight: 300; white-space: nowrap; }
.cursor, .bodysel { display: flex; align-items: center; justify-content: center; background: #fff; border: 1px solid #888; }
.cursor { width: 48px; height: 48px; margin: 10px 0 15px 3px; border-radius: 9px; }
.bodysel { width: 32px; height: 32px; margin-left: 2px; border-radius: 6px; }

/* annotations over the window */
.marks { position: absolute; top: 0; left: 0; pointer-events: none; }
.note { position: absolute; display: flex; align-items: center; gap: 9px; }
.first { left: 93px; top: 279px; }
.second { left: 1090px; top: 278px; }
.note b { width: 20px; height: 20px; border-radius: 50%; background: #fc3838; color: #fff; text-align: center; font: 13px/20px "Noto Sans", sans-serif; }
.note span { position: relative; height: 34px; padding: 0 12px 0 6px; border-radius: 3px; background: #666; color: #fff; font-size: 16px; line-height: 32px; }
.note span::before { content: ""; position: absolute; left: -4px; top: 12px; border: solid transparent; border-width: 5px 4px 5px 0; border-right-color: #666; }
```
